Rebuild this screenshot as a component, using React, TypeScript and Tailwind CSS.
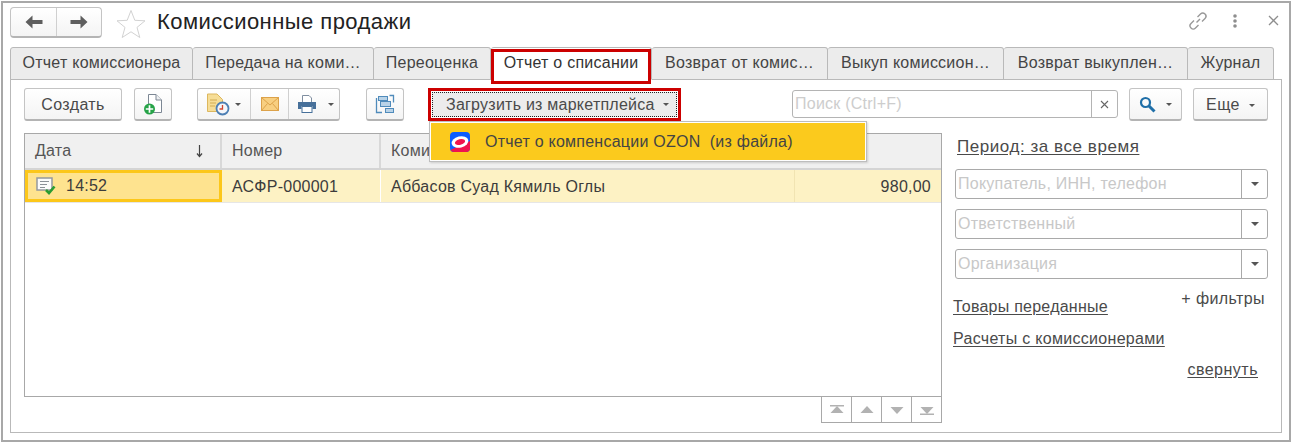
const font = "font-['Liberation_Sans',Arial,sans-serif]";

function Btn({ className = "", children }: { className?: string; children: React.ReactNode }) {
  return (
    <div className={"flex items-center justify-center h-[33px] rounded-[3px] border border-[#c4c4c4] border-b-2 border-b-[#b4b4b4] bg-gradient-to-b from-white to-[#f4f4f4] text-[#4a4a4a] text-[16px] tracking-[0.4px] " + className}>
      {children}
    </div>
  );
}

function Caret({ className = "" }: { className?: string }) {
  return <span className={"inline-block w-0 h-0 border-x-[3px] border-x-transparent border-t-[3px] border-t-[#555] " + className} />;
}

function Tab({ w, children, active }: { w: string; children: React.ReactNode; active?: boolean }) {
  return (
    <div className={"relative flex items-center justify-center h-[33px] pb-[2px] rounded-t-[3px] border border-[#b9b9b9] border-l-0 first:border-l text-[16px] " + (active ? "bg-white text-[#333] border-b-white z-10 " : "bg-[#ececec] text-[#444] ") + w}>
      {children}
    </div>
  );
}

function Combo({ text }: { text: string }) {
  return (
    <div className="flex h-[30px] w-[313px] rounded-[3px] border border-[#a9a9a9] bg-white">
      <div className="flex-1 flex items-center pl-[2px] pb-[1px] text-[16px] text-[#c8c8c8]">{text}</div>
      <div className="w-[26px] border-l border-[#a9a9a9] flex items-center justify-center"><Caret className="border-x-[4px] border-t-[4px]" /></div>
    </div>
  );
}

function NavTri({ up, bar }: { up?: boolean; bar?: boolean }) {
  return (
    <div className="w-[30px] h-full flex items-center justify-center border-l border-[#a9a9a9]">
      <svg width="14" height="10" viewBox="0 0 14 10">
        {up ? <polygon points="7,1 13.5,8 0.5,8" fill="#b2b2b2" /> : <polygon points="0.5,2 13.5,2 7,9" fill="#b2b2b2" />}
        {bar && (up ? <rect x="0" y="0" width="14" height="1.5" fill="#b2b2b2" /> : <rect x="0" y="8.5" width="14" height="1.5" fill="#b2b2b2" />)}
      </svg>
    </div>
  );
}

export default function App() {
  return (
    <div className={"w-[1292px] h-[445px] bg-white p-[1px] overflow-hidden tracking-[0.24px] " + font}>
      <div className="relative w-[1290px] h-[441px] border-2 border-[#a8a8a8] px-[7px] flex flex-col">
        <div className="h-[44px] flex items-center shrink-0">
          <div className="flex h-[31px] w-[92px] rounded-[4px] border border-[#c4c4c4] border-b-2 border-b-[#b4b4b4] bg-gradient-to-b from-white to-[#f4f4f4] -mt-[6px]">
            <div className="w-[46px] flex items-center justify-center border-r border-[#d0d0d0]">
              <svg width="18" height="14" viewBox="0 0 18 14"><path d="M7.5 0.5 L0.5 7 L7.5 13.5 V9 H17.5 V5 H7.5 Z" fill="#5e5e5e" /></svg>
            </div>
            <div className="flex-1 flex items-center justify-center">
              <svg width="18" height="14" viewBox="0 0 18 14"><path d="M10.5 0.5 L17.5 7 L10.5 13.5 V9 H0.5 V5 H10.5 Z" fill="#5e5e5e" /></svg>
            </div>
          </div>
          <svg className="ml-[14px] -mt-[2px]" width="30" height="30" viewBox="0 0 30 30"><polygon points="15,1.5 18.8,11.3 29,11.8 21,18.4 23.8,28.5 15,22.8 6.2,28.5 9,18.4 1,11.8 11.2,11.3" fill="none" stroke="#d2d2d2" strokeWidth="1" /></svg>
          <div className="ml-[11px] -mt-[7px] text-[22px] text-[#222] tracking-[0.45px] leading-none">Комиссионные продажи</div>
          <div className="ml-auto flex items-center -mt-[9px]">
            <svg width="20" height="20" viewBox="0 0 20 20" fill="none" stroke="#999" strokeWidth="1.4"><path d="M8.5 11.5 L12 8" /><path d="M9.5 6 L12.5 3 a3 3 0 0 1 4.5 4.5 L14 10.5" /><path d="M10.5 14 L7.5 17 a3 3 0 0 1 -4.5 -4.5 L6 9.5" /></svg>
            <svg className="ml-[24px]" width="6" height="14" viewBox="0 0 6 14" fill="#8e8e8e"><circle cx="3" cy="2" r="1.8" /><circle cx="3" cy="7" r="1.8" /><circle cx="3" cy="12" r="1.8" /></svg>
            <svg className="ml-[30px] mr-[3px]" width="11" height="11" viewBox="0 0 11 11" stroke="#8e8e8e" strokeWidth="1.3"><path d="M1 1 L10 10 M10 1 L1 10" /></svg>
          </div>
        </div>

        <div className="flex shrink-0 -mb-[1px] relative z-10">
          <Tab w="w-[183px]">Отчет комиссионера</Tab>
          <Tab w="w-[181px]">Передача на коми…</Tab>
          <Tab w="w-[117px]">Переоценка</Tab>
          <Tab w="w-[161px]" active>Отчет о списании
            <span className="absolute left-0 right-0 top-[1px] h-[35px] border-[3px] border-[#cc0000]" />
          </Tab>
          <Tab w="w-[176px]">Возврат от комис…</Tab>
          <Tab w="w-[176px]">Выкуп комиссион…</Tab>
          <Tab w="w-[184px]">Возврат выкуплен…</Tab>
          <Tab w="w-[86px]">Журнал</Tab>
        </div>

        <div className="relative w-[1272px] h-[354px] border border-[#b9b9b9] px-[13px] pt-[8px] flex flex-col">
          <div className="flex items-start h-[33px]">
            <Btn className="w-[98px] pt-[1px]">Создать</Btn>
            <Btn className="w-[38px] ml-[12px]">
              <svg width="20" height="24" viewBox="0 0 20 24">
                <path d="M5.5 2.5 H13 L18.5 8 V20.5 H5.5 Z" fill="#fff" stroke="#7c8794" />
                <path d="M13 2.5 V8 H18.5" fill="#eef0f2" stroke="#7c8794" />
                <circle cx="6.5" cy="17" r="5.5" fill="#27a348" />
                <path d="M6.5 13.3 V20.7 M2.8 17 H10.2" stroke="#fff" strokeWidth="1.7" />
              </svg>
            </Btn>
            <div className="flex h-[33px] w-[143px] ml-[25px] rounded-[3px] border border-[#c4c4c4] border-b-2 border-b-[#b4b4b4] bg-gradient-to-b from-white to-[#f4f4f4]">
              <div className="w-[53px] flex items-center pl-[8px] border-r border-[#d0d0d0]">
                <svg width="25" height="24" viewBox="0 0 25 24">
                  <path d="M1.5 2 H11 L16.5 7.5 V19.5 H1.5 Z" fill="#f6dd96" stroke="#dcb75e" />
                  <path d="M4 8 H11 M4 11 H10 M4 14 H9" stroke="#d3ac52" />
                  <circle cx="16.5" cy="16.5" r="6" fill="#f4f6fa" stroke="#4d7fb4" strokeWidth="1.8" />
                  <path d="M16.5 13 V17 H13.5" stroke="#d2452f" strokeWidth="1.3" fill="none" />
                </svg>
                <Caret className="ml-[4px]" />
              </div>
              <div className="w-[38px] flex items-center justify-center border-r border-[#d0d0d0]">
                <svg width="18" height="14" viewBox="0 0 18 14"><rect x="0.5" y="0.5" width="17" height="13" fill="#f8cf80" stroke="#dca24a" /><path d="M0.5 0.5 L9 8 L17.5 0.5 M0.5 13.5 L6.5 6.5 M17.5 13.5 L11.5 6.5" fill="none" stroke="#dca24a" /></svg>
              </div>
              <div className="flex-1 flex items-center pl-[8px]">
                <svg width="20" height="20" viewBox="0 0 20 20">
                  <path d="M5.5 8 V1.5 H12 L14.5 4 V8" fill="#fff" stroke="#7f8ea0" />
                  <path d="M1 8 H19 V15 H15.5 V12 H4.5 V15 H1 Z" fill="#47709a" />
                  <rect x="5" y="12.5" width="10" height="6" fill="#fff" stroke="#47709a" />
                </svg>
                <Caret className="ml-[11px]" />
              </div>
            </div>
            <Btn className="w-[38px] ml-[26px]">
              <svg width="20" height="20" viewBox="0 0 20 20" fill="#b9d3e8" stroke="#4f8bbb">
                <rect x="3.5" y="2.5" width="9" height="4" />
                <rect x="5.5" y="7.5" width="10" height="5" />
                <rect x="10.5" y="14.5" width="8" height="4" />
                <path d="M1.5 4 V18.5 H7 M14.5 1.5 H18.5 V8.5" fill="none" strokeWidth="1.3" />
              </svg>
            </Btn>
            <div className="ml-[24px] w-[253px] h-[33px] border-[3px] border-[#cc0000] p-[1px] bg-white">
              <div className="h-full flex items-center pl-[13px] bg-[#ececec] border border-dotted border-[#222] text-[#4a4a4a] text-[16px]">
                Загрузить из маркетплейса<Caret className="ml-[8px]" />
              </div>
            </div>
            <div className="ml-[111px] flex w-[326px] h-[28px] mt-[2px] rounded-[3px] border border-[#b4b4b4] bg-white">
              <div className="flex-1 flex items-center pl-[2px] text-[16px] text-[#cdcdcd]">Поиск (Ctrl+F)</div>
              <div className="w-[26px] border-l border-[#b4b4b4] flex items-center justify-center">
                <svg width="9" height="9" viewBox="0 0 9 9" stroke="#666" strokeWidth="1.1"><path d="M1 1 L8 8 M8 1 L1 8" /></svg>
              </div>
            </div>
            <Btn className="w-[53px] ml-[11px]">
              <svg width="17" height="17" viewBox="0 0 17 17" fill="none" stroke="#1f6fa8" strokeWidth="2.2"><circle cx="6.5" cy="6.5" r="4.5" /><path d="M10 10 L15.5 15.5" strokeWidth="3" /></svg>
              <Caret className="ml-[10px]" />
            </Btn>
            <Btn className="w-[75px] ml-[11px] pt-[2px]">Еще<Caret className="ml-[9px]" /></Btn>
          </div>

          <div className="flex mt-[12px] flex-1">
            <div className="w-[918px] flex flex-col">
              <div className="h-[264px] border border-[#a8a8a8] flex flex-col">
                <div className="grid grid-cols-[197px_159px_414px_1fr] h-[36px] bg-[#f0f0f0] border-b-2 border-[#d4d4d4] text-[#555] text-[16px]">
                  <div className="flex items-center justify-between pl-[10px] pr-[16px] border-r-2 border-[#d8d8d8]">
                    Дата
                    <svg width="9" height="14" viewBox="0 0 9 14" fill="none" stroke="#444" strokeWidth="1.2"><path d="M4.5 1 V12 M2 9.5 L4.5 12.5 L7 9.5" /></svg>
                  </div>
                  <div className="flex items-center pl-[10px] border-r-2 border-[#d8d8d8]">Номер</div>
                  <div className="flex items-center pl-[10px]">Комиссионер</div>
                  <div />
                </div>
                <div className="grid grid-cols-[197px_159px_414px_1fr] h-[33px] bg-[#fdf2c4] border-b border-[#e6e6e6] text-[#3c3c3c] text-[16px]">
                  <div className="flex items-center pl-[8px] bg-[#fee38f] border-[3px] border-[#fcc71a]">
                    <svg width="20" height="18" viewBox="0 0 20 18">
                      <rect x="1" y="1" width="15" height="12" fill="#fbfbfb" stroke="#94999f" strokeWidth="1.5" />
                      <path d="M4 4.5 H13 M4 7.5 H11 M4 10.5 H9" stroke="#8b9096" />
                      <path d="M10 13 L13 16 L18.5 9.5" fill="none" stroke="#2a9c32" strokeWidth="2.6" />
                    </svg>
                    <span className="ml-[10px]">14:52</span>
                  </div>
                  <div className="flex items-center pl-[10px] pt-[1px] border-r border-white">АСФР-000001</div>
                  <div className="flex items-center pl-[10px] pt-[1px] border-r border-[#f1e4b2]">Аббасов Суад Кямиль Оглы</div>
                  <div className="flex items-center justify-end pr-[10px] pt-[1px]">980,00</div>
                </div>
              </div>
              <div className="self-end flex h-[26px] w-[121px] border-b border-r border-[#a8a8a8]">
                <NavTri up bar />
                <NavTri up />
                <NavTri />
                <NavTri bar />
              </div>
            </div>

            <div className="w-[313px] ml-[13px] flex flex-col text-[16px] text-[#4a4a4a]">
              <div className="pl-[2px] h-[36px] leading-[28px] text-[17px] tracking-[0.55px]"><span className="underline underline-offset-2">Период: за все время</span></div>
              <div className="flex flex-col gap-[10px]">
                <Combo text="Покупатель, ИНН, телефон" />
                <Combo text="Ответственный" />
                <Combo text="Организация" />
              </div>
              <div className="flex items-start justify-between mt-[8px] -ml-[2px] pr-[3px]">
                <span className="mt-[8px] underline underline-offset-2">Товары переданные</span>
                <span className="tracking-[0.4px]">+ фильтры</span>
              </div>
              <span className="-ml-[2px] mt-[8px] underline underline-offset-2 tracking-[0.3px]">Расчеты с комиссионерами</span>
              <span className="self-end mr-[10px] mt-[7px] underline underline-offset-2 tracking-[0.5px]">свернуть</span>
            </div>
          </div>

          <div className="absolute left-[418px] top-[41px] w-[438px] h-[41px] bg-white border border-[#bdbdbd] p-[1px] z-20 shadow-[1px_1px_2px_rgba(0,0,0,0.15)]">
            <div className="h-full flex items-center pl-[19px] bg-[#fbca1d] text-[#444] text-[16px]">
              <svg width="20" height="20" viewBox="0 0 20 20">
                <rect width="20" height="20" rx="4" fill="#0b5cff" />
                <path d="M20 9 V16 a4 4 0 0 1 -4 4 H4 a4 4 0 0 1 -3.5 -2 Z" fill="#f0134d" />
                <g transform="rotate(-14 10 10)">
                  <ellipse cx="10" cy="10" rx="8.5" ry="5.6" fill="#fff" />
                  <ellipse cx="10" cy="10" rx="5.2" ry="2.8" fill="#f0134d" />
                </g>
              </svg>
              <span className="ml-[15px] whitespace-pre">Отчет о компенсации OZON  (из файла)</span>
            </div>
          </div>
        </div>
      </div>
    </div>
  );
}
